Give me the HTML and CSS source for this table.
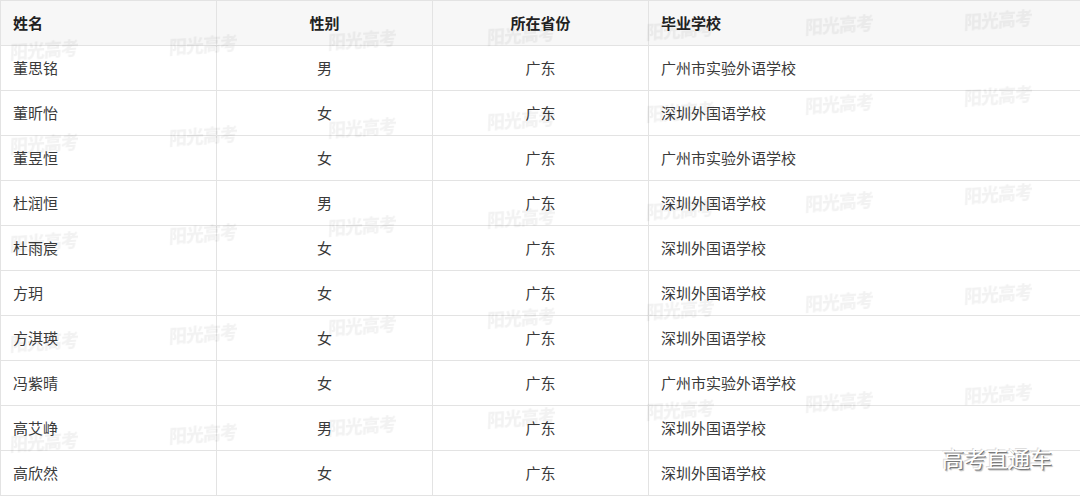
FILE: index.html
```html
<!DOCTYPE html>
<html lang="zh-CN">
<head>
<meta charset="utf-8">
<title>名单</title>
<link rel="stylesheet" href="styles.css">
</head>
<body>
<div class="sheet">
  <table class="roster">
    <colgroup>
      <col class="c1"><col class="c2"><col class="c3"><col class="c4">
    </colgroup>
    <thead>
      <tr><th class="left">姓名</th><th>性别</th><th>所在省份</th><th class="left">毕业学校</th></tr>
    </thead>
    <tbody>
      <tr><td class="left">董思铭</td><td>男</td><td>广东</td><td class="left">广州市实验外语学校</td></tr>
      <tr><td class="left">董昕怡</td><td>女</td><td>广东</td><td class="left">深圳外国语学校</td></tr>
      <tr><td class="left">董昱恒</td><td>女</td><td>广东</td><td class="left">广州市实验外语学校</td></tr>
      <tr><td class="left">杜润恒</td><td>男</td><td>广东</td><td class="left">深圳外国语学校</td></tr>
      <tr><td class="left">杜雨宸</td><td>女</td><td>广东</td><td class="left">深圳外国语学校</td></tr>
      <tr><td class="left">方玥</td><td>女</td><td>广东</td><td class="left">深圳外国语学校</td></tr>
      <tr><td class="left">方淇瑛</td><td>女</td><td>广东</td><td class="left">深圳外国语学校</td></tr>
      <tr><td class="left">冯紫晴</td><td>女</td><td>广东</td><td class="left">广州市实验外语学校</td></tr>
      <tr><td class="left">高艾峥</td><td>男</td><td>广东</td><td class="left">深圳外国语学校</td></tr>
      <tr><td class="left">高欣然</td><td>女</td><td>广东</td><td class="left">深圳外国语学校</td></tr>
    </tbody>
  </table>
  <div class="watermarks" id="wm"></div>
  <div class="brand">高考直通车</div>
</div>
<script src="script.js"></script>
</body>
</html>
```

FILE: styles.css
```css
html, body {
  margin: 0;
  padding: 0;
  background: #ffffff;
}
body {
  font-family: "Noto Sans CJK SC", "Noto Sans", sans-serif;
  color: #3a3a3a;
  overflow: hidden;
}
.sheet {
  position: relative;
  width: 1080px;
  height: 497px;
  overflow: hidden;
}
.roster {
  width: 1080px;
  border-collapse: collapse;
  table-layout: fixed;
  font-size: 15px;
}
.c1, .c2, .c3 { width: 216px; }
.c4 { width: 432px; }
.roster th, .roster td {
  border: 1px solid #e3e3e3;
  height: 44px;
  padding: 0 12px;
  text-align: center;
  vertical-align: middle;
  line-height: 20px;
  white-space: nowrap;
  font-weight: 400;
}
.roster th {
  background: #f7f7f7;
  font-weight: 700;
  color: #222222;
}
.roster .left { text-align: left; }
.watermarks {
  position: absolute;
  inset: 0;
  pointer-events: none;
}
.wm {
  position: absolute;
  font-family: "Noto Sans CJK SC", serif;
  font-weight: 900;
  font-size: 18px;
  letter-spacing: -1px;
  color: rgba(0, 0, 0, 0.05);
  transform: rotate(-4deg) skewX(-6deg);
  filter: blur(0.7px);
  white-space: nowrap;
}
.brand {
  position: absolute;
  right: 28px;
  bottom: 28px;
  font-size: 22px;
  line-height: 24px;
  color: #ffffff;
  text-shadow: 1px 1px 0 #7a7a7a, 2px 2px 1px #bdbdbd, -1px -1px 0 #dddddd;
}
```

FILE: script.js
```js
(function () {
  var host = document.getElementById('wm');
  var rows = [36, 130, 228, 328, 428];
  for (var r = 0; r < rows.length; r++) {
    for (var c = 0; c < 7; c++) {
      var el = document.createElement('span');
      el.className = 'wm';
      el.textContent = '阳光高考';
      var x = 10 + c * 159;
      var y = rows[r] - c * (r === 0 ? 5 : 8);
      el.style.left = x + 'px';
      el.style.top = y + 'px';
      host.appendChild(el);
    }
  }
})();
```
